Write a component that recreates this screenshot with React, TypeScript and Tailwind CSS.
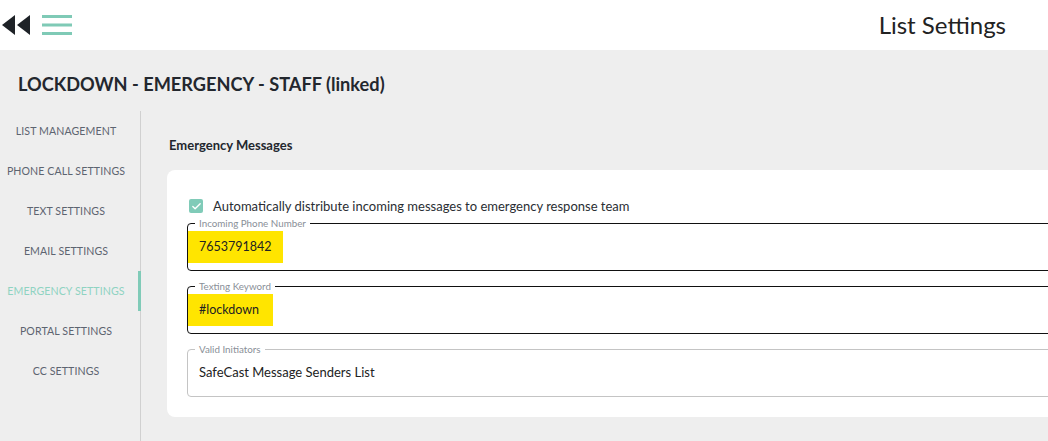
import { Check } from 'lucide-react';

const navItems = [
  'LIST MANAGEMENT',
  'PHONE CALL SETTINGS',
  'TEXT SETTINGS',
  'EMAIL SETTINGS',
  'EMERGENCY SETTINGS',
  'PORTAL SETTINGS',
  'CC SETTINGS',
];

const font = { fontFamily: "Lato, 'Noto Sans', sans-serif" };

function Field({
  label,
  value,
  highlight,
  dark,
}: {
  label: string;
  value: string;
  highlight?: string;
  dark?: boolean;
}) {
  return (
    <fieldset className={`rounded-[4px] border px-0 ${dark ? 'border-[#111]' : 'border-[#c4c4c4]'}`}>
      <legend className="ml-[7px] px-[4px] text-[9.8px] leading-[10px] text-[#8a8f98]">{label}</legend>
      <div className="flex h-[42px] items-start pt-[3px]">
        {highlight ? (
          <span className={`flex h-[32px] items-center bg-[#ffe500] pl-[11px] text-[12.5px] text-[#222] ${highlight}`}>
            {value}
          </span>
        ) : (
          <span className="flex h-[32px] items-center pl-[11px] text-[13px] text-[#222]">{value}</span>
        )}
      </div>
    </fieldset>
  );
}

export default function App() {
  return (
    <div className="flex h-[441px] w-[1048px] flex-col overflow-hidden bg-[#eeeeee]" style={font}>
      <header className="flex h-[50px] shrink-0 items-center bg-white">
        <div className="flex items-center pl-[2px]">
          <svg width="29" height="20" viewBox="0 0 29 20">
            <polygon points="13,0 13,20 0,10" fill="#1e2227" />
            <polygon points="28,0 28,20 15,10" fill="#1e2227" />
          </svg>
          <svg width="30" height="20" viewBox="0 0 30 20" className="ml-[11px]">
            <rect x="0" y="0" width="30" height="3" fill="#7fcab6" />
            <rect x="0" y="8.5" width="30" height="3" fill="#7fcab6" />
            <rect x="0" y="17" width="30" height="3" fill="#7fcab6" />
          </svg>
        </div>
        <div className="ml-auto pr-[42px] text-[24px] text-[#222]">List Settings</div>
      </header>

      <h1 className="shrink-0 pl-[18px] pt-[22px] text-[18.2px] font-bold leading-[24px] text-[#23272e]">
        LOCKDOWN - EMERGENCY - STAFF (linked)
      </h1>

      <div className="mt-[15px] flex min-h-0 flex-1">
        <nav className="w-[141px] shrink-0 border-r border-[#d0d0d0]">
          {navItems.map((item) => {
            const active = item === 'EMERGENCY SETTINGS';
            return (
              <div
                key={item}
                className={`relative flex h-10 items-center justify-center pr-[8px] pt-[2px] text-[10.6px] tracking-[0.1px] ${
                  active ? 'text-[#8fd3c2]' : 'text-[#5d6470]'
                }`}
              >
                {item}
                {active ? <span className="absolute right-[-1px] top-0 h-10 w-[3px] bg-[#80cbb8]" /> : null}
              </div>
            );
          })}
        </nav>

        <main className="min-w-0 flex-1 pl-[26px]">
          <h2 className="pl-[2px] pt-[26px] text-[13px] font-bold leading-[16px] text-[#23272e]">Emergency Messages</h2>
          <div className="mr-[-40px] mt-[17px] rounded-[8px] bg-white pb-[20px] pl-[20px] pt-[28px]">
            <label className="flex items-center gap-[10px] pl-[2px]">
              <span className="flex h-[14px] w-[14px] items-center justify-center rounded-[2px] bg-[#80cbb8]">
                <Check size={11} strokeWidth={3} color="white" />
              </span>
              <span className="text-[13px] leading-[16px] text-[#2a2e33]">
                Automatically distribute incoming messages to emergency response team
              </span>
            </label>
            <div className="mt-[4px] flex flex-col gap-[10px]">
              <Field label="Incoming Phone Number" value="7653791842" highlight="w-[95px]" dark />
              <Field label="Texting Keyword" value="#lockdown" highlight="w-[85px]" dark />
              <Field label="Valid Initiators" value="SafeCast Message Senders List" />
            </div>
          </div>
        </main>
      </div>
    </div>
  );
}
